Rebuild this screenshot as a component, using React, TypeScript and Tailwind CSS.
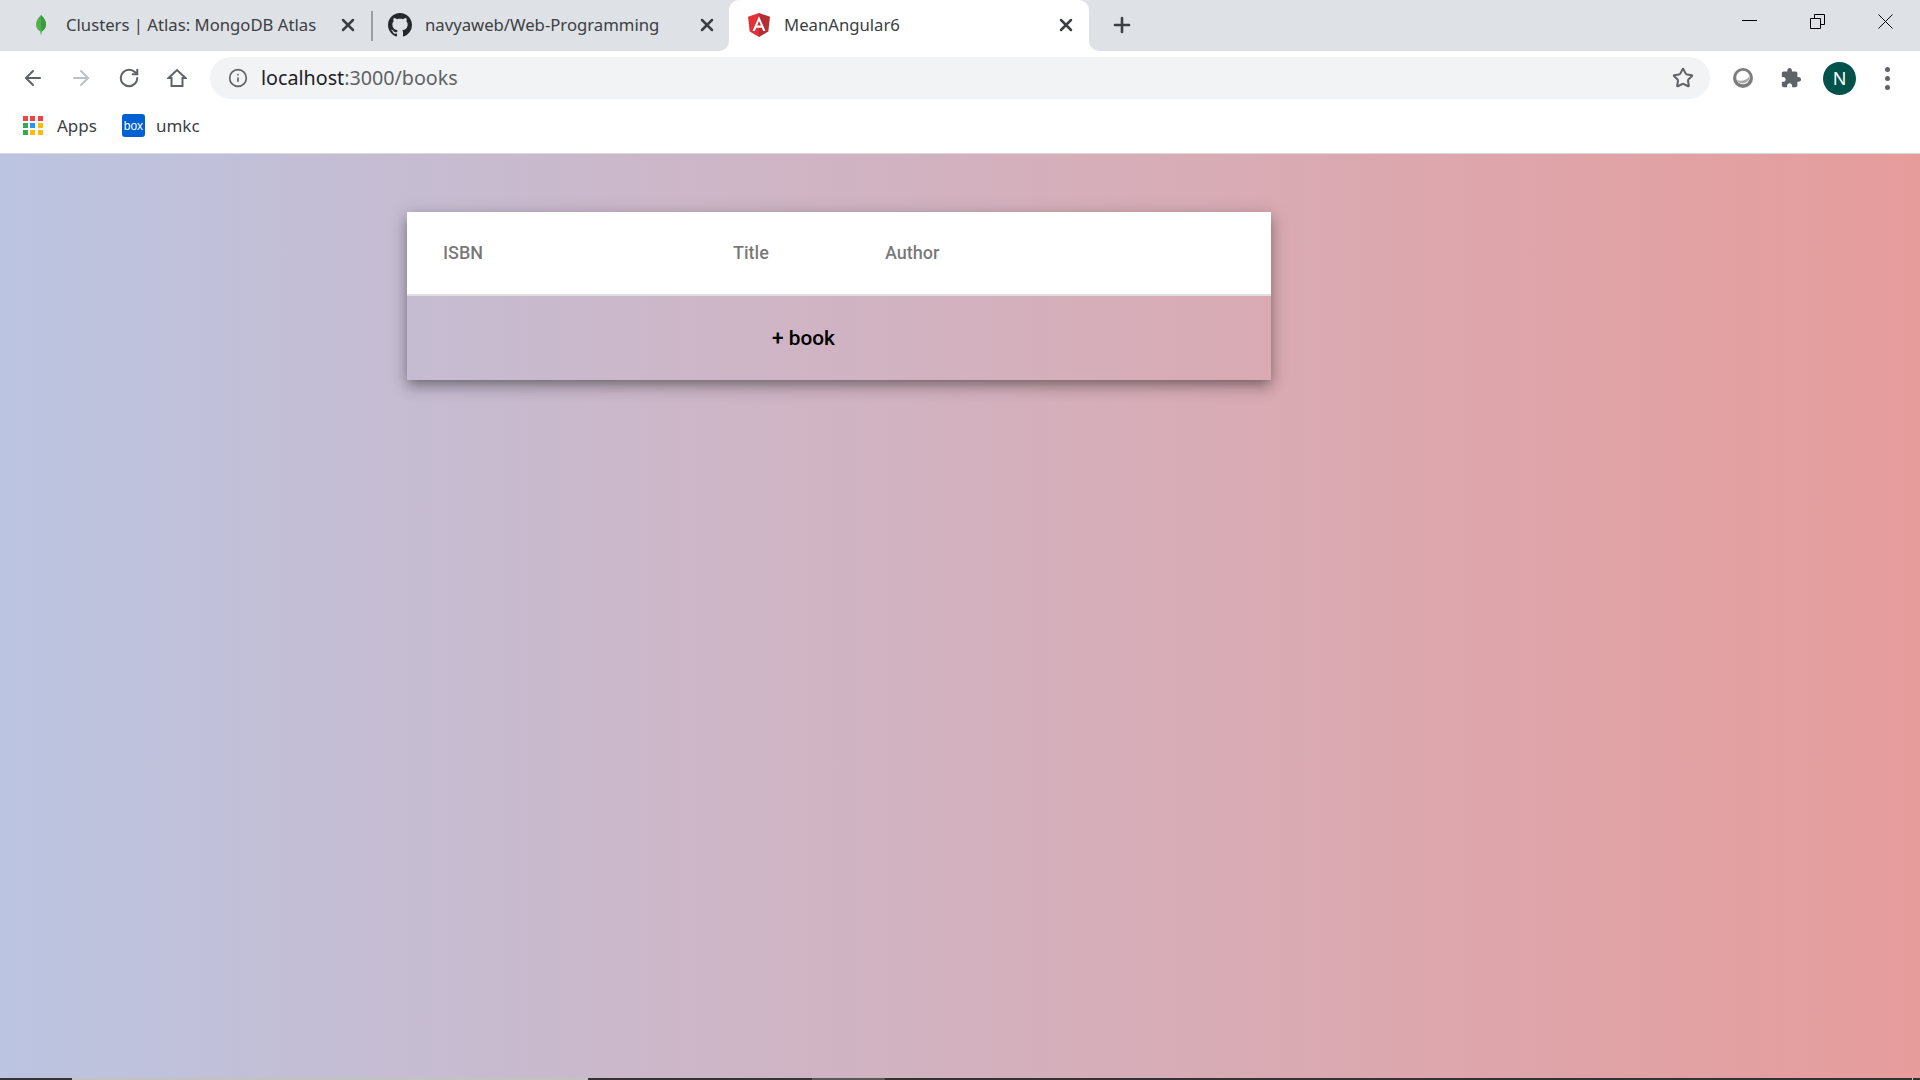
import { ArrowLeft, ArrowRight, Info, Plus, RotateCw, Star, X } from "lucide-react"

const uiFont = "font-['Noto_Sans','Open_Sans',sans-serif]"

function LeafIcon() {
    return (
        <svg width="12" height="20" viewBox="0 0 12 20">
            <path d="M6 0C3 3 1 6 1 9.500C1 13 3 15 5.300 16.500L5.600 19.500H6.400L6.700 16.500C9 15 11 13 11 9.500C11 6 9 3 6 0Z" fill="#4caf50" />
            <path d="M6 0C9 3 11 6 11 9.500C11 13 9 15 6.700 16.500L6 10Z" fill="#3f9a3f" />
        </svg>
    )
}

function GithubIcon() {
    return (
        <svg width="24" height="24" viewBox="0 0 16 16" fill="#24292e">
            <path d="M8 0C3.580 0 0 3.580 0 8c0 3.540 2.290 6.530 5.470 7.590.4.070.55-.17.55-.38 0-.19-.01-.82-.01-1.490-2.010.37-2.530-.49-2.690-.94-.09-.23-.48-.94-.82-1.130-.28-.15-.68-.52-.01-.53.63-.01 1.080.58 1.230.82.720 1.210 1.870.87 2.330.66.070-.52.280-.87.510-1.070-1.780-.2-3.640-.89-3.640-3.950 0-.87.310-1.590.820-2.150-.08-.2-.36-1.020.08-2.120 0 0 .67-.21 2.200.82.640-.18 1.320-.27 2-.27s1.360.09 2 .27c1.530-1.040 2.200-.82 2.200-.82.440 1.100.160 1.920.080 2.120.51.560.82 1.270.82 2.150 0 3.070-1.870 3.750-3.650 3.950.29.250.54.730.54 1.480 0 1.070-.01 1.930-.01 2.200 0 .21.150.46.550.38A8.010 8.010 0 0 0 16 8c0-4.420-3.580-8-8-8z" />
        </svg>
    )
}

function AngularIcon() {
    return (
        <svg width="24" height="24" viewBox="0 0 24 24">
            <path d="M12 0L1 3.800L2.700 18.400L12 24Z" fill="#e23237" />
            <path d="M12 0L23 3.800L21.300 18.400L12 24Z" fill="#b52e31" />
            <path d="M12 3.200L5.500 18H7.900L9.200 14.700H14.800L16.100 18H18.500ZM13.900 12.600H10.100L12 8Z" fill="#fff" />
        </svg>
    )
}

function HomeIcon() {
    return (
        <svg width="20" height="20" viewBox="0 0 20 20" fill="none" stroke="#5f6368" strokeWidth="2">
            <path d="M1.500 10L10 2L18.500 10H15.500V18H4.500V10Z" />
        </svg>
    )
}

function AppsIcon() {
    const colors = ["#ef4444", "#ef4444", "#ef4444", "#34a853", "#2196f3", "#fbbc05", "#34a853", "#fbbc05", "#fbbc05"]
    return (
        <div className="grid grid-cols-3 gap-[2px] w-5 h-5">
            {colors.map((color, idx) => (
                <svg key={idx} width="5" height="5" viewBox="0 0 5 5">
                    <rect width="5" height="5" fill={color} />
                </svg>
            ))}
        </div>
    )
}

function BoxIcon() {
    return (
        <div className="w-[23px] h-[23px] rounded-[3px] bg-[#0061d5] flex items-center justify-center text-white text-[12px] leading-none font-['Liberation_Sans',sans-serif]">
            box
        </div>
    )
}

function PuzzleIcon() {
    return (
        <svg width="22" height="22" viewBox="0 0 24 24" fill="#5f6368">
            <path d="M20.500 11H19V7c0-1.100-.9-2-2-2h-4V3.500C13 2.120 11.880 1 10.500 1S8 2.120 8 3.500V5H4c-1.100 0-1.990.9-1.990 2v3.800H3.500c1.490 0 2.700 1.210 2.700 2.700s-1.210 2.700-2.700 2.700H2V20c0 1.100.9 2 2 2h3.800v-1.500c0-1.490 1.210-2.700 2.700-2.700s2.700 1.210 2.700 2.700V22H17c1.100 0 2-.9 2-2v-4h1.500c1.380 0 2.500-1.120 2.500-2.500S21.880 11 20.500 11z" />
        </svg>
    )
}

function ExtensionIcon() {
    return (
        <svg width="22" height="22" viewBox="0 0 22 22">
            <circle cx="11" cy="11" r="10" fill="#7d7d7d" />
            <circle cx="11" cy="10.500" r="6.800" fill="#fff" />
            <path d="M17.500 9.500a6.800 6.800 0 0 1-12.600 3.500c4 1.500 9.500 0.500 12.600-3.500Z" fill="#a8a8a8" />
        </svg>
    )
}

function Tab({ icon, title, active, divider }: { icon: React.ReactNode; title: string; active?: boolean; divider?: boolean }) {
    return (
        <div className={`relative h-[51px] shrink-0 flex items-center pl-[18px] pb-[1px] gap-[13px] rounded-t-[10px] ${active ? "w-[360px] pr-[13px] bg-white" : "w-[359px] pr-[12px]"}`}>
            <div className="w-6 h-6 shrink-0 flex items-center justify-center">{icon}</div>
            <span className="flex-1 truncate text-[16.7px] text-[#3c4043]">{title}</span>
            <X className="w-5 h-5 text-[#3c4043]" strokeWidth={3} />
            {divider && <div className="absolute -right-[3px] top-[11px] h-[30px] w-[2px] bg-[#9aa0a6]" />}
            {active && (
                <>
                    <div className="absolute -left-[10px] bottom-0 w-[10px] h-[10px] bg-white">
                        <div className="w-full h-full rounded-br-[10px] bg-[#dee1e6]" />
                    </div>
                    <div className="absolute -right-[10px] bottom-0 w-[10px] h-[10px] bg-white">
                        <div className="w-full h-full rounded-bl-[10px] bg-[#dee1e6]" />
                    </div>
                </>
            )}
        </div>
    )
}

function Header() {
    return (
        <div className={`${uiFont} shrink-0`}>
            {/* Tabs */}
            <div className="h-[51px] bg-[#dee1e6] flex items-start">
                <div className="w-[11px] shrink-0" />
                <Tab icon={<LeafIcon />} title="Clusters | Atlas: MongoDB Atlas" divider />
                <Tab icon={<GithubIcon />} title="navyaweb/Web-Programming" />
                <Tab icon={<AngularIcon />} title="MeanAngular6" active />
                <div className="h-full flex items-center pl-[21px] pb-[2px]">
                    <Plus className="w-6 h-6 text-[#3c4043]" strokeWidth={2.6} />
                </div>
                <div className="flex-1" />
                <div className="flex h-full pt-[14px] pr-[27px] gap-[53px]">
                    <div className="w-[15px] h-[1px] mt-[6px] bg-black" />
                    <svg width="15" height="15" viewBox="0 0 15 15" fill="none" stroke="#000">
                        <path d="M0.500 4.500H10.500V14.500H0.500ZM4.500 4.500V0.500H14.500V10.500H10.500" />
                    </svg>
                    <svg width="15" height="15" viewBox="0 0 15 15" stroke="#000">
                        <path d="M0.500 0.500L14.500 14.500M14.500 0.500L0.500 14.500" />
                    </svg>
                </div>
            </div>

            {/* Toolbar */}
            <div className="h-[54px] bg-white flex items-center pl-[21px]">
                <ArrowLeft className="w-[24px] h-[24px] text-[#5f6368]" strokeWidth={2} />
                <ArrowRight className="w-[24px] h-[24px] ml-[24px] text-[#bdc1c6]" strokeWidth={2} />
                <RotateCw className="w-[22px] h-[22px] ml-[25px] text-[#5f6368]" strokeWidth={2.2} />
                <div className="ml-[27px]"><HomeIcon /></div>
                <div className="ml-[23px] flex-1 max-w-[1500px] h-[42px] rounded-full bg-[#f1f3f4] flex items-center pl-[18px] pr-[16px]">
                    <Info className="w-[20px] h-[20px] text-[#5f6368]" />
                    <span className="ml-[13px] flex-1 text-[19.7px]">
                        <span className="text-[#202124]">localhost</span>
                        <span className="text-[#5f6368]">:3000/books</span>
                    </span>
                    <Star className="w-[22px] h-[22px] text-[#5f6368]" strokeWidth={2.2} />
                </div>
                <div className="ml-[22px]"><ExtensionIcon /></div>
                <div className="ml-[26px]"><PuzzleIcon /></div>
                <div className="ml-[21px] w-[33px] h-[33px] rounded-full bg-[#00524a] text-white flex items-center justify-center text-[18px]">
                    N
                </div>
                <div className="ml-[29px] flex flex-col gap-[4px]">
                    <div className="w-[5px] h-[5px] rounded-full bg-[#5f6368]" />
                    <div className="w-[5px] h-[5px] rounded-full bg-[#5f6368]" />
                    <div className="w-[5px] h-[5px] rounded-full bg-[#5f6368]" />
                </div>
            </div>

            {/* Bookmarks */}
            <div className="h-[48px] bg-white flex items-center pl-[23px] pb-[7px] text-[17px] text-[#3c4043]">
                <AppsIcon />
                <span className="ml-[14px]">Apps</span>
                <div className="ml-[25px]"><BoxIcon /></div>
                <span className="ml-[11px]">umkc</span>
            </div>
            <div className="h-[1px] bg-[#d9d9dc]" />
        </div>
    )
}

function BooksTable() {
    return (
        <div className="ml-[407px] mt-[58px] w-[864px] h-[168px] shadow-[0_5px_10px_-3px_rgba(0,0,0,0.3),0_8px_14px_1px_rgba(0,0,0,0.14),0_3px_18px_2px_rgba(0,0,0,0.12)] font-['Roboto',sans-serif]">
            <div className="h-[84px] pb-[2px] bg-white border-b-2 border-[#e0e0e0] flex items-center text-[18px] font-medium text-black/55">
                <span className="ml-[36px] w-[290px]">ISBN</span>
                <span className="w-[152px]">Title</span>
                <span>Author</span>
            </div>
            <div className="h-[84px] pt-[1px] flex items-center text-[20.8px] font-medium text-black">
                <span className="ml-[365px]">+ book</span>
            </div>
        </div>
    )
}

export default function App() {
    return (
        <div className="w-full h-screen overflow-hidden flex flex-col">
            <Header />
            <div className="flex-1 bg-gradient-to-r from-[#bbc4e1] to-[#e69c9b] flex flex-col">
                <div className="flex-1">
                    <BooksTable />
                </div>
                {/* Taskbar sliver */}
                <div className="h-[2px] flex">
                    <div className="w-[72px] bg-[#333333]" />
                    <div className="w-[516px] bg-[#c2c2be]" />
                    <div className="w-[224px] bg-[#333333]" />
                    <div className="w-[73px] bg-[#5a5a5a]" />
                    <div className="flex-1 bg-[#333333]" />
                    <div className="w-[1px] bg-[#c2c2be]" />
                    <div className="w-[7px] bg-[#333333]" />
                </div>
            </div>
        </div>
    )
}
